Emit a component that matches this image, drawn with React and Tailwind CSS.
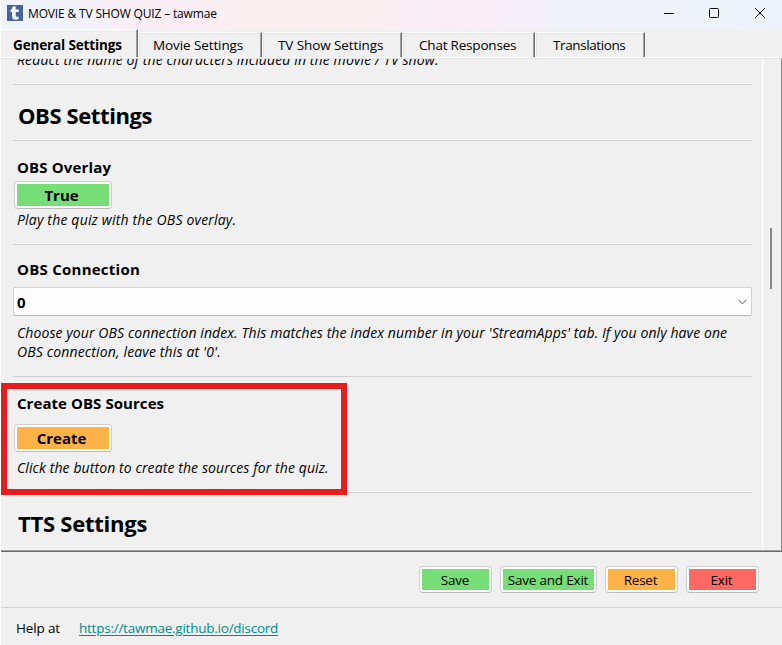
const sans = "font-['Open_Sans','Noto_Sans',sans-serif]";

function Tab({ children, className, textClass }) {
  return (
    <div className={`h-[25px] shrink-0 border-t border-l border-t-white border-l-white border-r border-r-[#696969] shadow-[inset_-1px_0_0_#a0a0a0,inset_1px_1px_0_#e3e3e3] flex items-center bg-[#f0f0f0] ${className}`}>
      <span className={`text-[13.5px] leading-5 whitespace-nowrap ${textClass}`}>{children}</span>
    </div>
  );
}

function Button({ children, frame, fill, text }) {
  return (
    <button className={`shrink-0 block rounded-[4px] border border-[#d0d0d0] border-b-[#bcbcbc] bg-[#fdfdfd] p-[2px] ${frame}`}>
      <span className={`flex h-full w-full items-center justify-center whitespace-nowrap ${fill} ${text}`}>{children}</span>
    </button>
  );
}

function Divider() {
  return <div className="h-px shrink-0 bg-[#d0d0d0]" />;
}

function Note({ children, className }) {
  return <p className={`ml-1 text-[14px] italic leading-[19px] whitespace-nowrap ${className}`}>{children}</p>;
}

function Label({ children, className }) {
  return <h3 className={`ml-1 h-5 text-[15px] font-bold leading-5 whitespace-nowrap ${className}`}>{children}</h3>;
}

export default function App() {
  return (
    <div className={`relative flex h-[645px] w-[782px] flex-col overflow-hidden border-l border-white bg-[#f0f0f0] text-black ${sans}`}>
      <header className="flex h-[29px] shrink-0 items-center bg-[linear-gradient(90deg,#eff3fa_0%,#f1f2f9_8%,#f9edf5_18%,#faeef1_32%,#faeef1_46%,#f9edf6_60%,#f1f2f9_72%,#edf2fa_100%)] pb-[3px]">
        <svg className="ml-[6px] shrink-0" width="16" height="16" viewBox="0 0 16 16">
          <rect width="16" height="16" fill="#46659b" />
          <path d="M5.500 1.500h3.200v3h3v2.600h-3v3.700c0 1 .8 1.300 2.800.8v2.500c-3.500 1.200-6.400.5-6.400-2.600V7.100H3.500V5c1.500-.5 2-1.600 2-3.500z" fill="#fff" />
        </svg>
        <h1 className="ml-[5px] pt-[2px] text-[12px] leading-4 whitespace-nowrap tracking-[-0.16px]">MOVIE &amp; TV SHOW QUIZ – tawmae</h1>
        <svg className="ml-auto shrink-0" width="118" height="26" viewBox="0 0 118 26" fill="none" stroke="#000">
          <path d="M0 13.500h10" />
          <rect x="45.500" y="8.500" width="9" height="9" rx="1" />
          <path d="M91.200 8.200l9.600 9.600M100.800 8.200l-9.600 9.600" />
        </svg>
      </header>

      <nav className="flex h-[29px] shrink-0 items-end border-b border-white">
        <div className="flex h-[28px] w-[137px] shrink-0 items-center border-t border-r border-t-white border-r-[#696969] pt-[2px] pl-3 shadow-[inset_-1px_0_0_#a0a0a0]">
          <span className="text-[13.5px] font-bold leading-5 whitespace-nowrap tracking-[-0.14px]">General Settings</span>
        </div>
        <Tab className="w-[124px] pl-[14px]" textClass="tracking-[-0.1px]">Movie Settings</Tab>
        <Tab className="w-[140px] pl-[15px]" textClass="tracking-[-0.1px]">TV Show Settings</Tab>
        <Tab className="w-[133px] pl-4" textClass="tracking-[-0.2px]">Chat Responses</Tab>
        <Tab className="w-[110px] pl-[17px]" textClass="tracking-[-0.4px]">Translations</Tab>
      </nav>

      <div className="flex h-[494px] shrink-0 border-t border-r border-b border-t-[#e3e3e3] border-r-[#8a8a8a] border-b-[#696969] shadow-[inset_0_-1px_0_#a0a0a0]">
        <main className="mb-px ml-3 flex w-[739px] shrink-0 flex-col overflow-hidden">
          <Note className="-mt-[9px] mb-[15px] tracking-[0.12px]">Redact the name of the characters included in the movie / TV show.</Note>
          <Divider />
          <h2 className="ml-[5px] h-[55px] text-[22px] font-bold leading-[61px] whitespace-nowrap tracking-[-0.4px]">OBS Settings</h2>
          <Divider />
          <Label className="mt-[16px] tracking-[0.15px]">OBS Overlay</Label>
          <Button frame="mt-[4px] ml-[1px] h-7 w-[98px]" fill="bg-[#77dd77]" text="text-[15px] font-bold leading-5 pr-[3px]">True</Button>
          <Note className="mt-px mb-[15px] tracking-[0.18px]">Play the quiz with the OBS overlay.</Note>
          <Divider />
          <Label className="mt-[14px] tracking-[0.25px]">OBS Connection</Label>
          <div className="mt-[8px] flex h-[29px] shrink-0 items-center justify-between rounded-[2px] border border-[#d0d0d0] border-b-[#b8b8b8] bg-[#fdfdfd] pl-[3px] pr-1">
            <span className="text-[15px] font-bold leading-5">0</span>
            <svg width="9" height="6" viewBox="0 0 9 6" fill="none" stroke="#555"><path d="M.5.8l4 4 4-4" /></svg>
          </div>
          <Note className="mt-[7px] mb-[15px] tracking-[0.09px]">
            Choose your OBS connection index. This matches the index number in your 'StreamApps' tab. If you only have one<br />
            <span className="tracking-[0.15px]">OBS connection, leave this at '0'.</span>
          </Note>
          <Divider />
          <Label className="mt-[16px] tracking-[0.06px]">Create OBS Sources</Label>
          <Button frame="mt-[11px] ml-[1px] h-7 w-[98px]" fill="bg-[#ffb347]" text="text-[15px] font-bold leading-5 pr-[3px]">Create</Button>
          <Note className="mt-[6px] mb-[15px] tracking-[0.1px]">Click the button to create the sources for the quiz.</Note>
          <Divider />
          <h2 className="ml-[5px] h-[55px] text-[22px] font-bold leading-[61px] whitespace-nowrap tracking-[-0.25px]">TTS Settings</h2>
        </main>
        <aside className="mb-[2px] ml-[10px] flex flex-1 border-l border-white">
          <div className="mt-[169px] ml-[7px] h-[61px] w-[2px] bg-[#868686]" />
        </aside>
      </div>

      <div className="flex h-[56px] shrink-0 justify-end gap-2 border-b border-[#d0d0d0] pt-[14px] pr-[23px]">
        <Button frame="h-[27px] w-[73px]" fill="bg-[#77dd77]" text="pt-px pr-px text-[13.5px] tracking-[-0.15px]">Save</Button>
        <Button frame="h-[27px] w-[97px]" fill="bg-[#77dd77]" text="pt-px pr-px text-[13.5px] tracking-[-0.2px]">Save and Exit</Button>
        <Button frame="h-[27px] w-[73px]" fill="bg-[#ffb347]" text="pt-px pr-[2px] text-[13.5px] tracking-[-0.25px]">Reset</Button>
        <Button frame="h-[27px] w-[73px]" fill="bg-[#ff6961]" text="pt-px pr-[2px] text-[13.5px] tracking-[-0.25px]">Exit</Button>
      </div>

      <footer className="flex flex-1 items-center pb-px pl-[15px] pt-[3px] text-[13.5px] leading-5">
        <span className="w-[63px] whitespace-nowrap tracking-[-0.15px]">Help at</span>
        <a className="whitespace-nowrap text-[#008b8b] underline underline-offset-2 tracking-[-0.24px]">https://tawmae.github.io/discord</a>
      </footer>

      <div className="pointer-events-none absolute top-[383px] left-0 h-[112px] w-[346px] border-[6px] border-[#e81c1c]" />
    </div>
  );
}
